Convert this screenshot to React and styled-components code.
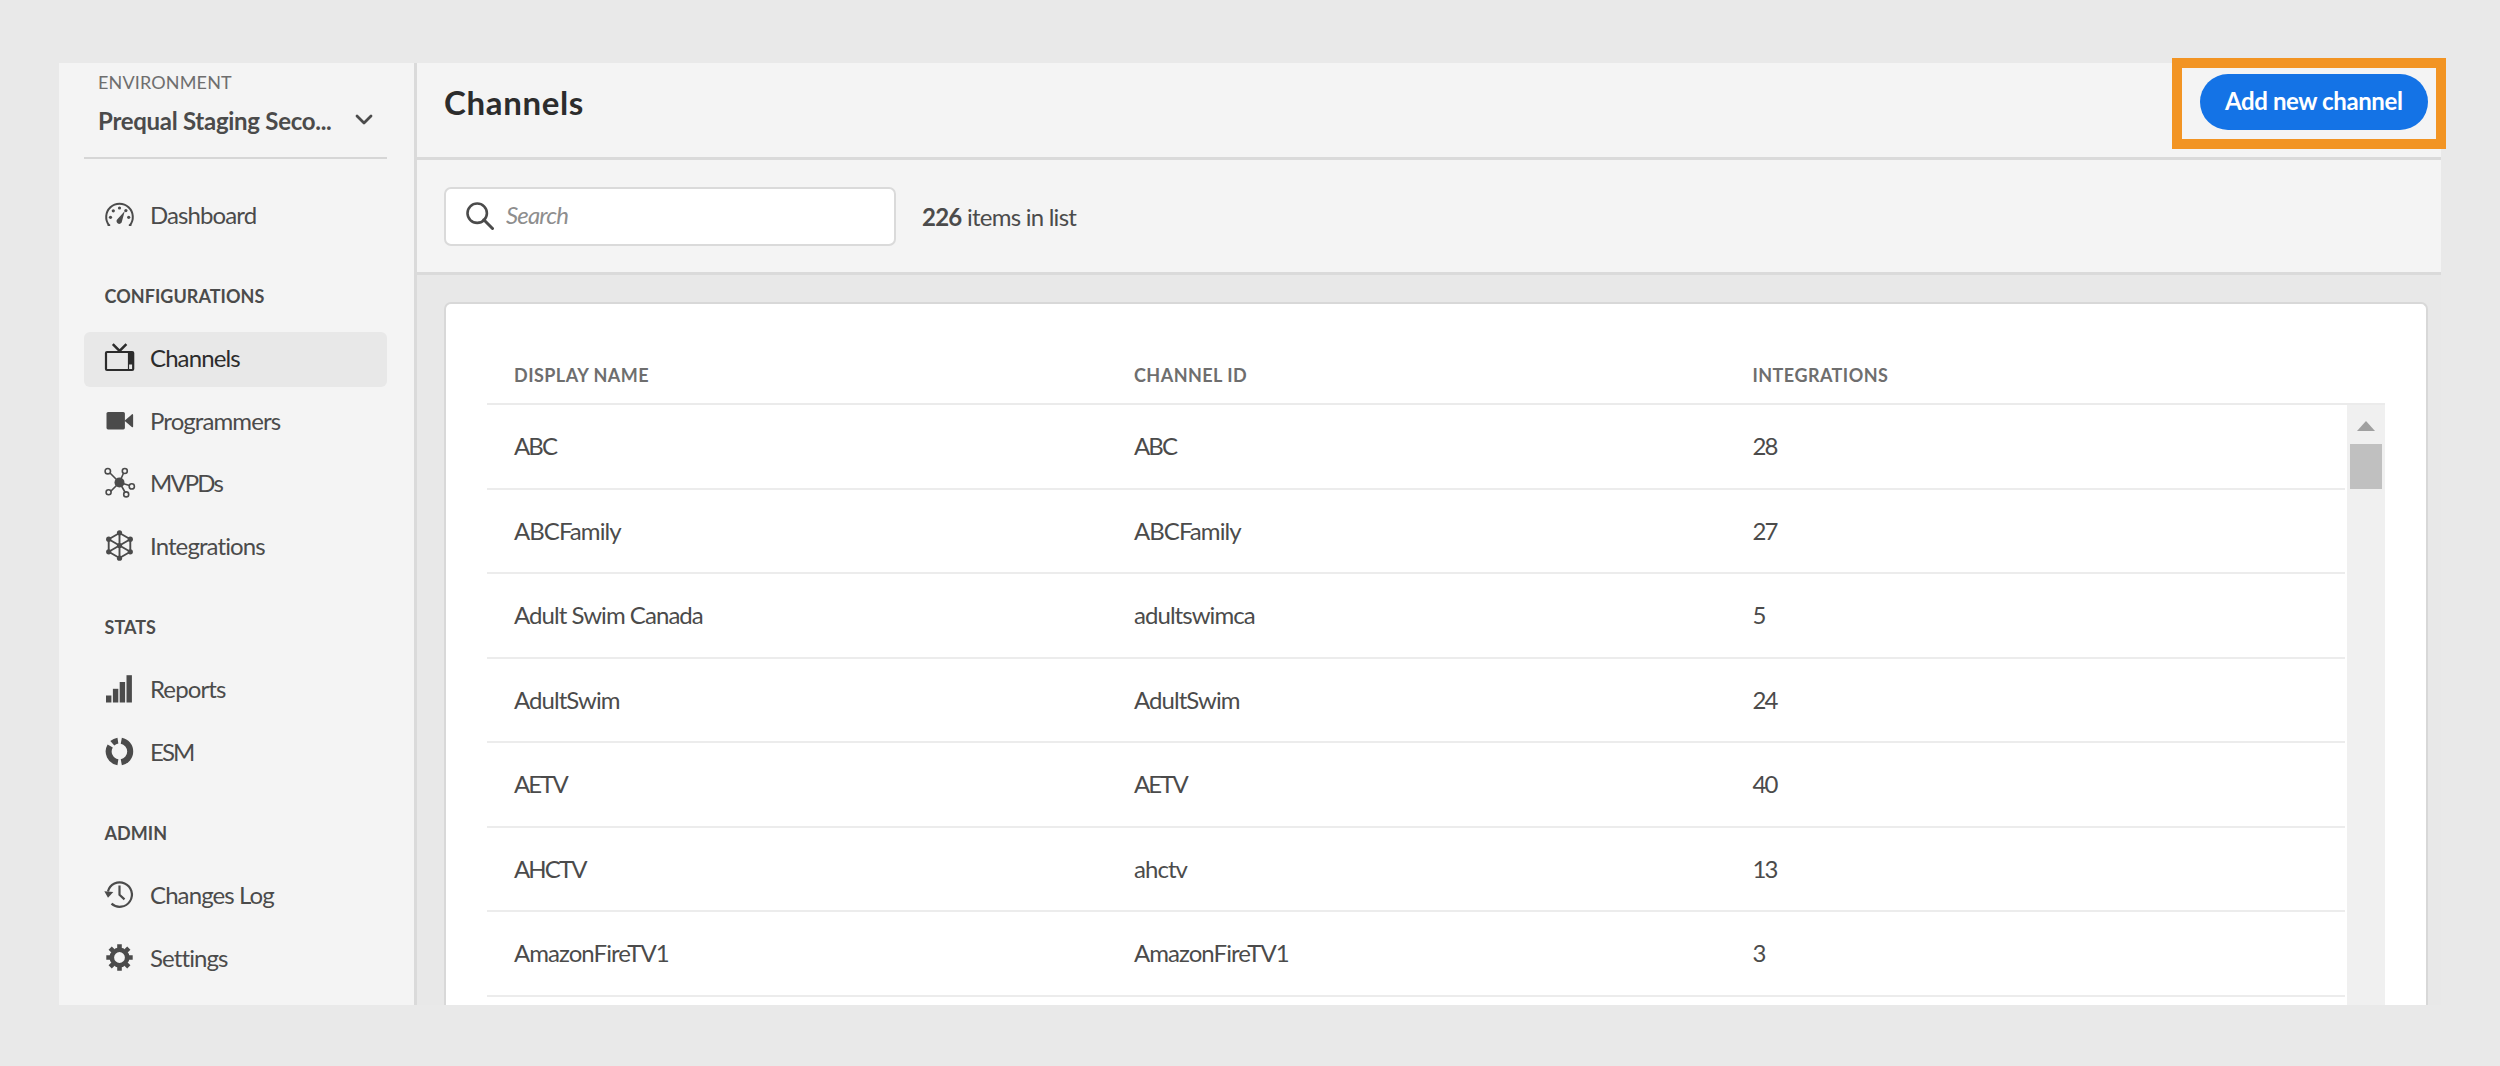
import React from 'react';
import styled, { createGlobalStyle } from 'styled-components';

const GlobalStyle = createGlobalStyle`
  *, *::before, *::after { box-sizing: border-box; }
  body {
    margin: 0;
    background: #e9e9e9;
    color: #4b4b4b;
    font-family: Lato, 'Noto Sans', sans-serif;
    font-size: 24px;
    letter-spacing: -0.95px;
  }
`;

const Page = styled.div`
  height: 1066px;
  padding: 63px 59px 61px;
  overflow: hidden;
`;

const Shell = styled.div`
  display: flex;
  width: 2382px;
  height: 942px;
`;

const Sidebar = styled.aside`
  flex: none;
  width: 358px;
  padding: 8px 27px 0 25px;
  background: #f4f4f4;
  border-right: 3px solid #dadada;
`;

const Environment = styled.div`
  height: 88px;
  padding: 0 14px;
  margin-bottom: 29.5px;
  border-bottom: 2px solid #d6d6d6;
`;

const EnvironmentLabel = styled.div`
  font-size: 18px;
  line-height: 22px;
  letter-spacing: 0.15px;
  color: #6e6e6e;
`;

const EnvironmentPicker = styled.div`
  display: flex;
  align-items: center;
  justify-content: space-between;
  margin-top: 13px;
  height: 30px;
  line-height: 30px;
  font-weight: 700;
  letter-spacing: -0.28px;
`;

const SectionTitle = styled.h2`
  margin: 0 0 0 20.5px;
  padding-top: 9.5px;
  height: 81px;
  line-height: 71px;
  font-size: 18px;
  font-weight: 700;
  letter-spacing: 0.05px;
`;

const NavItem = styled.a`
  display: flex;
  align-items: center;
  gap: 15.5px;
  height: 55px;
  margin-bottom: 7.5px;
  padding: 0 0 4px 19.5px;
  border-radius: 6px;
  background: ${(p) => (p.$active ? '#e8e8e8' : 'transparent')};
  color: ${(p) => (p.$active ? '#2c2c2c' : '#4b4b4b')};
  letter-spacing: ${(p) => (p.$tight ? '-1.9px' : '-0.9px')};
`;

const Icon = styled.svg`
  flex: none;
  width: 31px;
  height: 31px;
  overflow: visible;
`;

const Main = styled.main`
  flex: 1;
  display: flex;
  flex-direction: column;
  min-width: 0;
`;

const TitleBar = styled.header`
  display: flex;
  align-items: flex-start;
  justify-content: space-between;
  height: 97px;
  padding-left: 27px;
  background: #f4f4f4;
  border-bottom: 3px solid #dadada;
`;

const Title = styled.h1`
  margin: 18px 0 0;
  font-size: 33px;
  line-height: 42px;
  font-weight: 700;
  letter-spacing: 0.65px;
  color: #2c2c2c;
`;

const Highlight = styled.div`
  flex: none;
  width: 274px;
  height: 91px;
  margin: -5px -5px 0 0;
  padding: 6px 0 0 17.5px;
  border: 10px solid #f29423;
`;

const PrimaryButton = styled.button`
  display: block;
  width: 228.5px;
  height: 55.5px;
  padding: 0 0 2px;
  border: 0;
  border-radius: 28px;
  background: #1473e6;
  color: #fff;
  font: inherit;
  font-weight: 700;
  letter-spacing: -0.4px;
`;

const Toolbar = styled.div`
  display: flex;
  align-items: center;
  gap: 26.5px;
  height: 115px;
  padding-left: 27px;
  background: #f4f4f4;
  border-bottom: 3px solid #dadada;
`;

const SearchField = styled.label`
  display: flex;
  align-items: center;
  gap: 12px;
  width: 451.5px;
  height: 59px;
  padding: 0 0 1px 20px;
  border: 2px solid #dadada;
  border-radius: 7px;
  background: #fff;
`;

const SearchInput = styled.input`
  flex: 1;
  min-width: 0;
  padding: 0 0 2px;
  border: 0;
  outline: 0;
  background: transparent;
  font: inherit;
  letter-spacing: -0.85px;

  &::placeholder { color: #8e8e8e; font-style: italic; opacity: 1; }
`;

const Count = styled.span`
  letter-spacing: -0.75px;
`;

const Content = styled.div`
  flex: 1;
  min-height: 0;
  padding: 27px 13px 0 27px;
  background: #e8e8e8;
`;

const Card = styled.section`
  display: flex;
  flex-direction: column;
  height: 100%;
  padding: 38px 41px 0 40.5px;
  border: 2px solid #d8d8d8;
  border-bottom: 0;
  border-radius: 7px 7px 0 0;
  background: #fff;
`;

const columns = `
  display: grid;
  grid-template-columns: 620px 618.5px 1fr;
  padding-left: 27.5px;
`;

const TableHead = styled.div`
  ${columns}
  flex: none;
  height: 63px;
  border-bottom: 2px solid #ebebeb;
  font-size: 18px;
  line-height: 66px;
  font-weight: 700;
  letter-spacing: 0.45px;
  color: #6e6e6e;
`;

const TableBody = styled.div`
  flex: 1;
  display: flex;
  justify-content: space-between;
  min-height: 0;
  overflow: hidden;
`;

const Rows = styled.div`
  width: 1858.5px;
`;

const TableRow = styled.div`
  ${columns}
  height: 84.5px;
  line-height: 82px;
  border-bottom: 2px solid #ececec;
`;

const Cell = styled.span`
  letter-spacing: ${(p) => (p.$tight ? '-1.9px' : '-0.95px')};
`;

const ScrollTrack = styled.div`
  display: flex;
  flex-direction: column;
  align-items: center;
  width: 38.5px;
  height: 640px;
  padding-top: 16px;
  background: #f0f0f0;
`;

const ScrollArrow = styled.span`
  border: 9px solid transparent;
  border-top: 0;
  border-bottom: 10px solid #a0a0a0;
`;

const ScrollThumb = styled.span`
  width: 32px;
  height: 45px;
  margin-top: 12.5px;
  background: #c0c0c0;
`;

const DashboardIcon = () => (
  <Icon viewBox="0 0 31 31" fill="none" stroke="currentColor" strokeWidth="2">
    <path d="M5.2 26.4A13.3 13.3 0 1 1 25.8 26.4" />
    <path d="M3.6 26.2h2.6M24.8 26.2h2.6" strokeWidth="1.6" />
    <path d="M20.8 12L17.9 22.400a2.700 2.700 0 1 1-4.300-2.400z" fill="currentColor" stroke="none" />
    <g fill="currentColor" stroke="none">
      <circle cx="6.5" cy="18.3" r="1.6" /><circle cx="9.3" cy="11.8" r="1.6" /><circle cx="15.5" cy="9" r="1.6" />
      <circle cx="21.9" cy="11.6" r="1.6" /><circle cx="24.7" cy="18.3" r="1.6" />
    </g>
  </Icon>
);

const ChannelsIcon = () => (
  <Icon viewBox="0 0 31 31" fill="none" stroke="currentColor" strokeWidth="2.2">
    <rect x="2" y="10" width="27.2" height="18" rx="1" />
    <path d="M8.8 2.2l6.8 6.8 6.8-6.8" strokeWidth="2.5" />
    <path d="M24 10h5v12.5h-5z" fill="currentColor" stroke="none" />
    <path d="M24.5 10v18" strokeWidth="1.2" />
  </Icon>
);

const ProgrammersIcon = () => (
  <Icon viewBox="0 0 31 31" fill="currentColor">
    <rect x="2.5" y="7" width="18.4" height="17.4" rx="1.6" />
    <path d="M20.5 15.7l7.3-6.3q1.3-.8 1.3.6v11.500q0 1.300-1.300.5l-7.300-6.200z" />
  </Icon>
);

const MvpdsIcon = () => (
  <Icon viewBox="0 0 31 31" fill="none" stroke="currentColor" strokeWidth="1.6">
    <path d="M5.500 5.500l10 10M19.600 6l-4 9M15.500 15.500l10 3M15.500 15.500L6 25M15.500 15.500l6 10.500" />
    <circle cx="15.5" cy="15.5" r="5" fill="currentColor" stroke="none" />
    <g fill="#f4f4f4">
      <circle cx="3.8" cy="4.2" r="2.7" /><circle cx="20.8" cy="4" r="2.5" /><circle cx="27.8" cy="19.4" r="2.6" />
      <circle cx="4.6" cy="25.3" r="2.5" /><circle cx="22.2" cy="27.4" r="2.5" />
    </g>
  </Icon>
);

const IntegrationsIcon = () => (
  <Icon viewBox="0 0 31 31" fill="none" stroke="currentColor" strokeWidth="1.9">
    <path d="M15.5 3L26.3 9.2v12.6L15.5 28 4.7 21.8V9.2zM15.5 3v25M4.7 9.2l21.6 12.6M26.3 9.2L4.7 21.8" />
    <g fill="currentColor" stroke="none">
      <circle cx="15.5" cy="2.8" r="2.6" /><circle cx="26.3" cy="9.2" r="2.6" /><circle cx="26.3" cy="21.8" r="2.6" />
      <circle cx="15.5" cy="28.2" r="2.6" /><circle cx="4.7" cy="21.8" r="2.6" /><circle cx="4.7" cy="9.2" r="2.6" />
      <circle cx="15.5" cy="15.5" r="2.6" />
    </g>
  </Icon>
);

const ReportsIcon = () => (
  <Icon viewBox="0 0 31 31" fill="currentColor">
    <rect x="2" y="22.5" width="5.4" height="7" /><rect x="8.9" y="15.8" width="5.4" height="13.7" />
    <rect x="15.7" y="9" width="5.4" height="20.5" /><rect x="22.5" y="2.2" width="5.4" height="27.3" />
  </Icon>
);

const EsmIcon = () => (
  <Icon viewBox="0 0 31 31" fill="none" stroke="currentColor" strokeWidth="6">
    <path d="M17.3 4.7a11 11 0 0 1 0 21.600" />
    <path d="M13.9 26.3A11 11 0 0 1 6.2 9.9" />
    <path d="M8.3 7.2a11 11 0 0 1 5.6-2.6" />
  </Icon>
);

const HistoryIcon = () => (
  <Icon viewBox="0 0 31 31" fill="none" stroke="currentColor" strokeWidth="2.2">
    <path d="M3.9 12.5A12.2 12.2 0 1 1 7.5 24.6" />
    <path d="M15.5 6.5v9.3l5 4.6" />
    <path d="M.3 12.3l9 .8-5.3 5.6z" fill="currentColor" stroke="none" />
  </Icon>
);

const SettingsIcon = () => (
  <Icon viewBox="0 0 31 31" fill="none" stroke="currentColor">
    <circle cx="15.5" cy="15.5" r="7.7" strokeWidth="4.6" />
    <g strokeWidth="4.6">
      {[0, 45, 90, 135].map((a) => (
        <path key={a} d="M15.5 2.3v4M15.5 24.7v4" transform={`rotate(${a} 15.5 15.5)`} />
      ))}
    </g>
  </Icon>
);

const ChevronIcon = styled.svg`
  flex: none;
  width: 18px;
  height: 11px;
  margin-top: -4px;
`;

const SearchGlyph = styled.svg`
  flex: none;
  width: 28px;
  height: 28px;
`;

const overview = [{ label: 'Dashboard', Glyph: DashboardIcon }];
const sections = [
  {
    title: 'CONFIGURATIONS',
    items: [
      { label: 'Channels', Glyph: ChannelsIcon, active: true },
      { label: 'Programmers', Glyph: ProgrammersIcon },
      { label: 'MVPDs', Glyph: MvpdsIcon, tight: true },
      { label: 'Integrations', Glyph: IntegrationsIcon },
    ],
  },
  {
    title: 'STATS',
    items: [
      { label: 'Reports', Glyph: ReportsIcon },
      { label: 'ESM', Glyph: EsmIcon, tight: true },
    ],
  },
  {
    title: 'ADMIN',
    items: [
      { label: 'Changes Log', Glyph: HistoryIcon },
      { label: 'Settings', Glyph: SettingsIcon },
    ],
  },
];

const channels = [
  ['ABC', 'ABC', '28'],
  ['ABCFamily', 'ABCFamily', '27'],
  ['Adult Swim Canada', 'adultswimca', '5'],
  ['AdultSwim', 'AdultSwim', '24'],
  ['AETV', 'AETV', '40'],
  ['AHCTV', 'ahctv', '13'],
  ['AmazonFireTV1', 'AmazonFireTV1', '3'],
];

const isAcronym = (text) => /^[A-Z0-9]+$/.test(text);

const NavList = ({ items }) =>
  items.map(({ label, Glyph, active, tight }) => (
    <NavItem key={label} $active={active} $tight={tight}>
      <Glyph />
      <span>{label}</span>
    </NavItem>
  ));

export default function App() {
  return (
    <>
      <GlobalStyle />
      <Page>
        <Shell>
          <Sidebar>
            <Environment>
              <EnvironmentLabel>ENVIRONMENT</EnvironmentLabel>
              <EnvironmentPicker>
                <span>Prequal Staging Seco...</span>
                <ChevronIcon viewBox="0 0 18 11" fill="none" stroke="currentColor" strokeWidth="2.8" strokeLinecap="round" strokeLinejoin="round">
                  <path d="M2 2l7 7 7-7" />
                </ChevronIcon>
              </EnvironmentPicker>
            </Environment>
            <NavList items={overview} />
            {sections.map(({ title, items }) => (
              <nav key={title}>
                <SectionTitle>{title}</SectionTitle>
                <NavList items={items} />
              </nav>
            ))}
          </Sidebar>
          <Main>
            <TitleBar>
              <Title>Channels</Title>
              <Highlight>
                <PrimaryButton>Add new channel</PrimaryButton>
              </Highlight>
            </TitleBar>
            <Toolbar>
              <SearchField>
                <SearchGlyph viewBox="0 0 28 28" fill="none" stroke="currentColor" strokeWidth="2.6">
                  <circle cx="11.2" cy="11.2" r="9.7" />
                  <path d="M17.8 17.8l8.7 8.7" strokeWidth="3" strokeLinecap="round" />
                </SearchGlyph>
                <SearchInput placeholder="Search" />
              </SearchField>
              <Count><b>226</b> items in list</Count>
            </Toolbar>
            <Content>
              <Card>
                <TableHead>
                  <span>DISPLAY NAME</span>
                  <span>CHANNEL ID</span>
                  <span>INTEGRATIONS</span>
                </TableHead>
                <TableBody>
                  <Rows>
                    {channels.map((row) => (
                      <TableRow key={row[0]}>
                        {row.map((text, i) => (
                          <Cell key={i} $tight={isAcronym(text)}>{text}</Cell>
                        ))}
                      </TableRow>
                    ))}
                  </Rows>
                  <ScrollTrack>
                    <ScrollArrow />
                    <ScrollThumb />
                  </ScrollTrack>
                </TableBody>
              </Card>
            </Content>
          </Main>
        </Shell>
      </Page>
    </>
  );
}
